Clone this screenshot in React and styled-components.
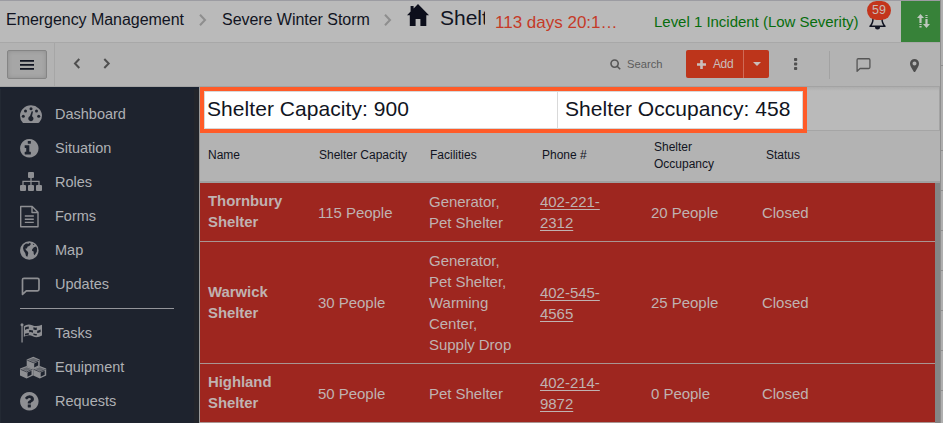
import React from 'react';
import styled, { createGlobalStyle } from 'styled-components';

const GlobalStyle = createGlobalStyle`
  *, *::before, *::after { box-sizing: border-box; }
  body { margin: 0; overflow: hidden; background: #b7b7b7; font-family: "Liberation Sans", Arial, sans-serif; color: #111422; }
`;

const Page = styled.div`
  display: grid;
  grid-template-columns: 940px 3px;
  width: 943px;
  height: 423px;
  overflow: hidden;
`;
const AppFrame = styled.div`
  display: flex;
  flex-direction: column;
  height: 423px;
  min-width: 0;
`;
const Edge = styled.div`
  display: flex;
  flex-direction: column;
  border-left: 1px solid #8f8f8f;
  background: #afafaf;
`;
const EdgeCell = styled.div`
  flex: none;
  height: ${(p) => p.$h}px;
  border-bottom: 1px solid #8f8f8f;
`;

const Header = styled.header`
  display: flex;
  flex: none;
  height: 43px;
  border-top: 1px solid #9c9ca2;
  border-bottom: 1px solid #a8a8a8;
  background: #bababa;
  padding-left: 6px;
`;
const Crumb = styled.span`
  flex: none;
  width: ${(p) => p.$w}px;
  font-size: 16px;
  letter-spacing: -0.04px;
  line-height: 37px;
  white-space: nowrap;
`;
const CrumbArrow = styled.svg`
  flex: none;
  margin: 13px ${(p) => p.$gap}px 0 15px;
`;
const HomeIcon = styled.svg`
  flex: none;
  margin: 3px 11px 0 0;
`;
const PageName = styled.span`
  flex: none;
  width: 45px;
  overflow: hidden;
  white-space: nowrap;
  font-size: 21px;
  line-height: 33px;
`;
const Elapsed = styled.span`
  flex: none;
  width: 169px;
  padding-left: 10px;
  font-size: 17px;
  line-height: 43px;
  color: #c53a28;
`;
const Severity = styled.span`
  flex: none;
  width: 213px;
  font-size: 15px;
  letter-spacing: -0.02px;
  line-height: 42px;
  white-space: nowrap;
  color: #076d0d;
`;
const Alerts = styled.div`
  position: relative;
  flex: none;
  width: 34px;
  svg { display: block; margin: 9px 0 0 1px; }
`;
const AlertCount = styled.span`
  position: absolute;
  left: 0;
  top: 0;
  width: 24px;
  height: 19px;
  border-radius: 10px;
  background: #c3351c;
  color: #c8bbb7;
  font-size: 12.5px;
  line-height: 18px;
  text-align: center;
`;
const SwapButton = styled.button`
  flex: none;
  width: 39px;
  border: 0;
  padding: 0 0 0 6px;
  background: #378239;
  display: flex;
  align-items: center;
  justify-content: center;
`;

const Toolbar = styled.div`
  display: flex;
  flex: none;
  align-items: center;
  height: 44px;
  background: #b3b3b3;
  border-bottom: 1px solid #a3a3a3;
`;
const MenuZone = styled.div`
  width: 55px;
  height: 43px;
  padding: 7px 0 0 7px;
  border-right: 1px solid #a6a6a6;
`;
const MenuButton = styled.button`
  display: flex;
  align-items: center;
  justify-content: center;
  width: 40px;
  height: 29px;
  padding: 1px 0 0;
  border: 1px solid #858585;
  border-radius: 2px;
  background: #a6a6a6;
  box-shadow: inset 0 0 4px #8e8e8e;
`;
const NavArrows = styled.div`
  display: flex;
  gap: 22px;
  width: 555px;
  padding-left: 18px;
  margin-top: -2px;
`;
const Search = styled.div`
  display: flex;
  align-items: center;
  gap: 6px;
  width: 76px;
  margin-top: -1px;
  font-size: 11.2px;
  color: #5c5c5c;
`;
const AddGroup = styled.div`
  display: flex;
  width: 83px;
  height: 28px;
  margin-top: -1px;
  border-radius: 2px;
  overflow: hidden;
  background: #bd351b;
  color: #cabebb;
`;
const AddButton = styled.div`
  display: flex;
  align-items: center;
  gap: 7px;
  width: 58px;
  padding-left: 11px;
  border-right: 1px solid #cf6b57;
  font-size: 12px;
  letter-spacing: -0.4px;
`;
const AddCaret = styled.div`
  flex: 1;
  display: flex;
  align-items: center;
  justify-content: center;
`;
const MoreIcon = styled.svg`margin: -1px 0 0 24px;`;
const Divider = styled.div`
  width: 1px;
  height: 28px;
  margin-left: 31px;
  background: #a2a2a2;
`;
const CommentIcon = styled.svg`margin: 1px 0 0 26px;`;
const PinIcon = styled.svg`margin: 1px 0 0 39px;`;

const Body = styled.div`
  display: flex;
  flex: 1;
  min-height: 0;
`;
const Sidebar = styled.nav`
  flex: none;
  width: 199px;
  padding-top: 10px;
  background: linear-gradient(90deg, #252b35 0 1px, #1e232e 1px 194px, #23252b 194px);
  box-shadow: inset 0 2px 1px #1a2230;
`;
const NavItem = styled.a`
  display: flex;
  align-items: center;
  height: 34px;
  padding-left: 20px;
  font-size: 14.5px;
  color: #aeb0b4;
`;
const NavIcon = styled.svg`
  display: block;
  flex: none;
  width: 28px;
  height: 24px;
  margin: 1px 7px 0 0;
  fill: #8e8f93;
  overflow: visible;
`;
const NavRule = styled.div`
  width: 154px;
  height: 1px;
  margin: 7px 0 7px 20px;
  background: #94959a;
`;

const Main = styled.main`
  display: flex;
  flex-direction: column;
  width: 741px;
  border-left: 1px solid #999;
`;
const Summary = styled.div`
  display: flex;
  flex: none;
  height: 46px;
  background: #b3b3b3;
`;
const Highlight = styled.div`
  display: flex;
  flex: none;
  width: 607px;
  border: 4px solid #ff5b28;
  background: #fff;
  box-shadow: inset 0 0 0 1px #d8d8d8;
`;
const Total = styled.div`
  width: ${(p) => p.$w}px;
  padding-left: ${(p) => p.$pad}px;
  font-size: 21px;
  letter-spacing: 0.06px;
  line-height: 36px;
  white-space: nowrap;
  border-right: ${(p) => (p.$divided ? '1px solid #d9d9d9' : '0')};
`;
const SummaryRest = styled.div`
  flex: 1;
  height: 44px;
  background: linear-gradient(#adadad, #bababa 4px);
  border-right: 1px solid #a3a3a3;
  border-bottom: 1px solid #a5a5a5;
`;
const TableHead = styled.div`
  display: grid;
  grid-template-columns: 111px 111px 112px 112px 112px 112px;
  flex: none;
  align-items: center;
  height: 50px;
  padding: 0 0 3px 8px;
  background: #b3b3b3;
  border-bottom: 2px solid #a0a0a0;
`;
const HeadCell = styled.div`
  font-size: 12px;
  line-height: 17px;
  padding-right: 20px;
  white-space: ${(p) => (p.$wrap ? 'normal' : 'nowrap')};
`;
const TableBody = styled.div`
  width: 740px;
  border-right: 5px solid #848484;
  color: #c0b2b1;
`;
const Row = styled.div`
  display: grid;
  grid-template-columns: 110px repeat(5, 111px);
  align-items: center;
  height: ${(p) => p.$h}px;
  padding-left: 8px;
  background: #9e261f;
  border-bottom: 1px solid #a99592;
`;
const Cell = styled.div`
  font-size: 15px;
  letter-spacing: -0.03px;
  line-height: 21px;
  padding-right: 20px;
  white-space: pre-line;
`;
const NameCell = styled(Cell)`
  font-weight: bold;
  font-size: 14.9px;
`;
const Phone = styled.a`
  text-decoration: underline;
  text-underline-offset: 2px;
`;

const Swap = () => (
  <svg width="13" height="15" viewBox="0 0 13 15" fill="#bfc8bf">
    <path d="M3.5 0 7 4H4.6v5H2.4V4H0zM2.4 10h2.2v1.1H2.4zM2.4 12h2.2v1.4H2.4zM8.4 5h2.2v5H13l-3.5 4L6 10h2.4zM8.4 3h2.2v1.1H8.4zM8.4 1h2.2v1.1H8.4z" />
  </svg>
);
const Bubble = ({ color }) => (
  <path d="M4 1h13.5Q19 1 19 2.5V12q0 1.5-1.5 1.5H6.3L2.5 17V2.5Q2.5 1 4 1Z" fill="none" stroke={color} strokeWidth="1.7" strokeLinejoin="round" />
);

const DISC = 'M896 128q209 0 385.5 103t279.5 279.5 103 385.5-103 385.5-279.5 279.5-385.5 103-385.5-103-279.5-279.5-103-385.5 103-385.5 279.5-279.5 385.5-103z';
const disc = (extra) => (
  <g transform="translate(-1.5 .5) scale(.01206)"><path fillRule="evenodd" d={DISC + extra} /></g>
);

const Cube = ({ x, y }) => (
  <g transform={`translate(${x} ${y})`}>
    <path d="M6.6 0 13 2.6V9.5L6.6 12.5 0 9.5V2.6z" />
    <path d="M1.8 3 6.6 1.2 11.3 3 6.6 5z" fill="#1e232e" opacity=".35" />
    <path d="M.6 3.4 6.6 5.9 12.4 3.4" fill="none" stroke="#1e232e" strokeWidth=".7" />
    <path d="M7.5 6.6 11.5 4.8V8.7L7.5 10.7z" fill="#1e232e" />
  </g>
);

const icons = {
  Dashboard: (
    <>
      <path d="M3 20Q0 17 0 12.8A11 10.5 0 0 1 22 12.8Q22 17 19.4 19.3 19 20 18 20Z" />
      <g fill="#1e232e">
        <circle cx="3.3" cy="13.3" r="1.5" /><circle cx="5.5" cy="8" r="1.5" /><circle cx="11" cy="5.7" r="1.5" />
        <circle cx="16.5" cy="8" r="1.5" /><circle cx="18.7" cy="13.3" r="1.5" />
        <path d="M11.7 8.2 13 8.5 12 13.2A2.6 2.6 0 1 1 10 13.1Z" />
      </g>
    </>
  ),
  Situation: disc('M1024 1376v-160q0-14-9-23t-23-9h-96v-512q0-14-9-23t-23-9h-320q-14 0-23 9t-9 23v160q0 14 9 23t23 9h96v320h-96q-14 0-23 9t-9 23v160q0 14 9 23t23 9h448q14 0 23-9t9-23zM1024 480v-160q0-14-9-23t-23-9h-192q-14 0-23 9t-9 23v160q0 14 9 23t23 9h192q14 0 23-9t9-23z'),
  Roles: (
    <>
      <rect x="8" y="1" width="6" height="6" rx="1" />
      <rect x="0" y="14" width="6" height="6" rx="1" /><rect x="8" y="14" width="6" height="6" rx="1" /><rect x="16" y="14" width="6" height="6" rx="1" />
      <path d="M3 14v-3.6h16V14M11 7v7" fill="none" stroke="#8e8f93" strokeWidth="1.3" />
    </>
  ),
  Forms: (
    <g fill="none" stroke="#8e8f93" strokeWidth="1.4" strokeLinejoin="round">
      <path d="M.7 1.5H12.2L18 7.2V21.8H.7ZM12 1.5V7.5H18M4.8 11h9M4.8 14.2h9M4.8 17.4h9" />
    </g>
  ),
  Map: (
    <>
      <circle cx="9.3" cy="11.5" r="9.3" />
      <path d="M3.8 6.2 6 4.4 8.6 4.8 9.8 3.8 11 5 9.3 7 7.7 7.6 6.8 9.4 5.4 9.6 5.9 11 7.6 12.4 8.3 14 7.4 17.8 6 17 5.3 14.2 3.6 11.6 3 9ZM12.2 10.2 13.9 8.2 16.1 7.6 17.1 9.6 16.8 12.8 14.6 16.2 13.7 15 13.6 12.6 12 11.8ZM12.8 4.7 14.5 5.2 13.2 6Z" fill="#1e232e" />
    </>
  ),
  Updates: <g transform="translate(0 4.3)"><Bubble color="#8e8f93" /></g>,
  Tasks: (
    <>
      <rect x="1.4" y="3" width="1.3" height="17.5" /><circle cx="2" cy="2.8" r="1.5" />
      <path d="M3.8 4.2Q8 1.2 12.2 3.2T22 2.8V13.4Q17 16.5 12.8 14.2T3.8 14.8Z" />
      <path d="M5 5.5Q7 4.4 8.8 4.4V6.8Q7 6.8 5 8ZM13.4 5.3Q15 5.9 16.8 5.6V7.8Q15 8.3 13.4 7.5ZM9.2 8Q11 7.7 13 8.6V10.8Q11 9.8 9.2 10.2ZM17.2 8.7Q19 8.3 20.6 7.4V9.9Q19 10.9 17.2 11.1ZM5 11.8Q7 11 8.8 10.9V12.7Q7 12.7 5 13.4ZM13.4 11.6Q15 12.3 16.8 12V13.4Q15 13.7 13.4 13Z" fill="#1e232e" />
    </>
  ),
  Equipment: <><Cube x={6.7} y={.8} /><Cube x={0} y={10} /><Cube x={13.2} y={10} /></>,
  Requests: disc('M1024 1376v-192q0-14-9-23t-23-9h-192q-14 0-23 9t-9 23v192q0 14 9 23t23 9h192q14 0 23-9t9-23zM1280 704q0-88-55.5-163t-138.5-116-170-41q-243 0-371 213-15 24 8 42l132 100q7 6 19 6 16 0 25-12 53-68 86-92 34-24 86-24 48 0 85.5 26t37.5 59q0 38-20 61t-68 45q-63 28-115.5 86.5t-52.5 125.5v36q0 14 9 23t23 9h192q14 0 23-9t9-23q0-19 21.5-49.5t54.5-49.5q32-18 49-28.5t46-35 44.5-48 28-60.5 12.5-81z'),
};

const Nav = ({ name }) => (
  <NavItem><NavIcon viewBox="0 0 28 24">{icons[name]}</NavIcon>{name}</NavItem>
);

const rows = [
  { h: 59, name: 'Thornbury Shelter', capacity: '115 People', facilities: 'Generator,\nPet Shelter', phone: '402-221-2312', occupancy: '20 People' },
  { h: 122, name: 'Warwick Shelter', capacity: '30 People', facilities: 'Generator,\nPet Shelter,\nWarming\nCenter,\nSupply Drop', phone: '402-545-4565', occupancy: '25 People' },
  { h: 59, name: 'Highland Shelter', capacity: '50 People', facilities: 'Pet Shelter', phone: '402-214-9872', occupancy: '0 People' },
];

const Arrow = ({ gap }) => (
  <CrumbArrow $gap={gap} width="8" height="12" viewBox="0 0 8 12"><path d="M1 .7 6 6 1 11.3" fill="none" stroke="#8e8e8e" strokeWidth="2" /></CrumbArrow>
);

export default function App() {
  return (
    <Page>
      <GlobalStyle />
      <AppFrame>
        <Header>
          <Crumb $w={178}>Emergency Management</Crumb>
          <Arrow gap={15} />
          <Crumb $w={147}>Severe Winter Storm</Crumb>
          <Arrow gap={15} />
          <HomeIcon width="22" height="22" viewBox="0 0 22 22" fill="#0c0e1b"><path d="M11 0 22 11.3H19.3V22H13.4V15H8.6V22H2.8V11.3H0L3.6 7.5V2H6.6V4.5Z" /></HomeIcon>
          <PageName>Shelt</PageName>
          <Elapsed>113 days 20:1…</Elapsed>
          <Severity>Level 1 Incident (Low Severity)</Severity>
          <Alerts>
            <svg width="20" height="20" viewBox="0 0 20 20">
              <path d="M9 2Q5 3 5 8.5 5 13.5 2 16.2H17Q14 13.5 14 8.5 14 3 10 2Z" fill="none" stroke="#111422" strokeWidth="1.5" strokeLinejoin="round" />
              <path d="M7 17H12Q12 19.5 9.5 19.5T7 17Z" fill="#111422" />
            </svg>
            <AlertCount>59</AlertCount>
          </Alerts>
          <SwapButton aria-label="Swap"><Swap /></SwapButton>
        </Header>
        <Toolbar>
          <MenuZone>
            <MenuButton aria-label="Menu"><svg width="14" height="10" fill="#111422"><path d="M0 0h14v1.8H0zM0 4h14v1.8H0zM0 8h14v1.8H0z" /></svg></MenuButton>
          </MenuZone>
          <NavArrows>
            <svg width="8" height="11" viewBox="0 0 8 11"><path d="M6.3 1 2 5.5 6.3 10" fill="none" stroke="#4f4f4f" strokeWidth="2" /></svg>
            <svg width="8" height="11" viewBox="0 0 8 11"><path d="M1.3 1 5.7 5.5 1.3 10" fill="none" stroke="#4f4f4f" strokeWidth="2" /></svg>
          </NavArrows>
          <Search>
            <svg width="11" height="11" viewBox="0 0 11 11" fill="none" stroke="#555" strokeWidth="1.6"><circle cx="4.6" cy="4.6" r="3.6" /><path d="m7.2 7.2 3 3" /></svg>
            Search
          </Search>
          <AddGroup>
            <AddButton><svg width="9" height="9" fill="#cabebb"><path d="M3.2 0h2.6v3.2H9v2.6H5.8V9H3.2V5.8H0V3.2h3.2z" /></svg>Add</AddButton>
            <AddCaret><svg width="8" height="4" fill="#cabebb"><path d="M0 0h8L4 4z" /></svg></AddCaret>
          </AddGroup>
          <MoreIcon width="5" height="12" fill="#505050"><rect x="1" y="0" width="3.2" height="3" rx=".8" /><rect x="1" y="4.5" width="3.2" height="3" rx=".8" /><rect x="1" y="9" width="3.2" height="3" rx=".8" /></MoreIcon>
          <Divider />
          <CommentIcon width="15" height="14" viewBox="1.5 0 18.5 18"><Bubble color="#565656" /></CommentIcon>
          <PinIcon width="9" height="13" viewBox="0 0 9 13" fill="#4e4e4e"><path fillRule="evenodd" d="M4.5 0A4.5 4.5 0 0 1 9 4.5Q9 6 8 8L5.4 12.5Q4.5 13.5 3.6 12.5L1 8Q0 6 0 4.5A4.5 4.5 0 0 1 4.5 0ZM4.5 2.6A2 2 0 1 0 4.5 6.6 2 2 0 0 0 4.5 2.6Z" /></PinIcon>
        </Toolbar>
        <Body>
          <Sidebar>
            {['Dashboard', 'Situation', 'Roles', 'Forms', 'Map', 'Updates'].map((n) => <Nav key={n} name={n} />)}
            <NavRule />
            {['Tasks', 'Equipment', 'Requests'].map((n) => <Nav key={n} name={n} />)}
          </Sidebar>
          <Main>
            <Summary>
              <Highlight>
                <Total $w={354} $pad={3} $divided>Shelter Capacity: 900</Total>
                <Total $w={245} $pad={7}>Shelter Occupancy: 458</Total>
              </Highlight>
              <SummaryRest />
            </Summary>
            <TableHead>
              <HeadCell>Name</HeadCell>
              <HeadCell>Shelter Capacity</HeadCell>
              <HeadCell>Facilities</HeadCell>
              <HeadCell>Phone #</HeadCell>
              <HeadCell $wrap>Shelter Occupancy</HeadCell>
              <HeadCell>Status</HeadCell>
            </TableHead>
            <TableBody>
              {rows.map((r) => (
                <Row key={r.name} $h={r.h}>
                  <NameCell>{r.name}</NameCell>
                  <Cell>{r.capacity}</Cell>
                  <Cell>{r.facilities}</Cell>
                  <Cell><Phone>{r.phone}</Phone></Cell>
                  <Cell>{r.occupancy}</Cell>
                  <Cell>Closed</Cell>
                </Row>
              ))}
            </TableBody>
          </Main>
        </Body>
      </AppFrame>
      <Edge>
        <EdgeCell $h={66} /><EdgeCell $h={85} />
        {[0, 1, 2, 3, 4, 5].map((i) => <EdgeCell key={i} $h={40} />)}
      </Edge>
    </Page>
  );
}
